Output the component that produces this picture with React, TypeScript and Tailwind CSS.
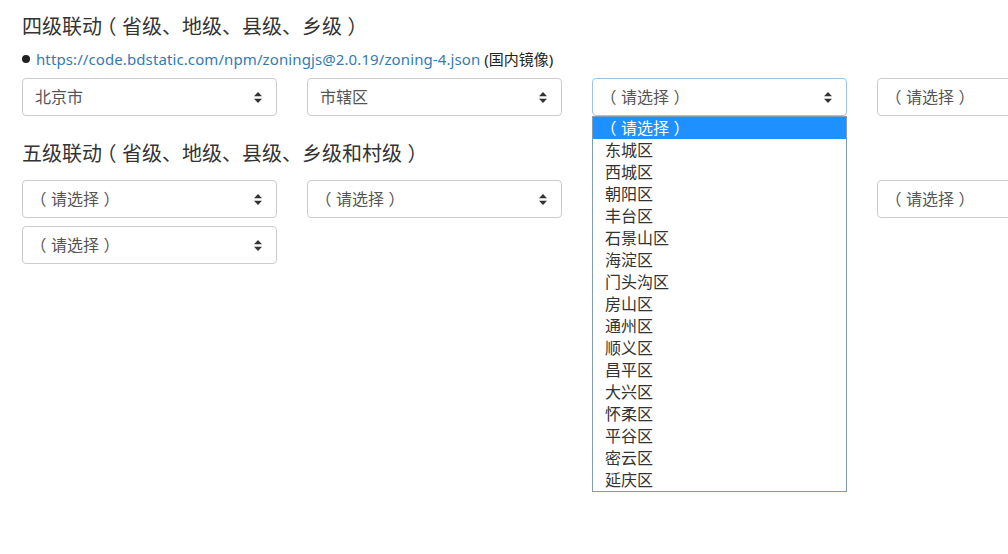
import React from 'react';

const FONT = { fontFamily: '"Noto Sans", "Noto Sans CJK SC", sans-serif' };

const districts = [
  '东城区', '西城区', '朝阳区', '丰台区', '石景山区', '海淀区', '门头沟区', '房山区',
  '通州区', '顺义区', '昌平区', '大兴区', '怀柔区', '平谷区', '密云区', '延庆区',
];

// full-width brackets drawn centred in their em box, like the YaHei ones
const Cjk = ({ text }: { text: string }) => (
  <>
    {text.split(/([（）])/).map((part, i) =>
      part === '（' ? (
        <span key={i} className="relative -left-[0.28em]">（</span>
      ) : part === '）' ? (
        <span key={i} className="relative left-[0.28em]">）</span>
      ) : (
        part
      )
    )}
  </>
);

const Arrows = () => (
  <svg width="8" height="11" viewBox="0 0 8 11" className="shrink-0">
    <path d="M4 0 L8 4.2 L0 4.2 Z" fill="#333" />
    <path d="M4 11 L8 6.8 L0 6.8 Z" fill="#333" />
  </svg>
);

const FakeSelect = ({ value, focused = false, children }: { value: string; focused?: boolean; children?: React.ReactNode }) => (
  <div className="relative w-[255px]">
    <div
      className={`flex h-[38px] items-center justify-between rounded-[4px] border bg-white pl-[12px] pr-[14px] text-[16px] text-[#555] ${
        focused ? 'border-[#9ec3e6]' : 'border-[#ccc]'
      }`}
    >
      <span>
        <Cjk text={value} />
      </span>
      <Arrows />
    </div>
    {children}
  </div>
);

const Dropdown = () => (
  <div className="absolute left-0 top-[38px] z-10 w-[255px] border border-[#7f9cb8] bg-white text-[16px] leading-[22px] text-[#333]">
    <div className="bg-[#1e90ff] pl-[12px] text-white">
      <Cjk text="（请选择）" />
    </div>
    {districts.map((d) => (
      <div key={d} className="pl-[12px]">
        {d}
      </div>
    ))}
  </div>
);

export default function App() {
  return (
    <div lang="zh-CN" className="h-[554px] w-[1008px] overflow-hidden bg-white text-[#333]" style={FONT}>
      <div className="w-[1160px] pl-[22px] pt-[14px]">
        <h3 className="text-[20px] leading-[26px]">
          <Cjk text="四级联动（省级、地级、县级、乡级）" />
        </h3>
        <p className="mt-[9px] flex items-center text-[15px] leading-[20px]">
          <span className="mr-[6px] inline-block h-[8px] w-[8px] rounded-full bg-[#222]" />
          <span className="tracking-[0.1px] text-[#337ab7]">https://code.bdstatic.com/npm/zoningjs@2.0.19/zoning-4.json</span>
          <span className="ml-[4px] text-[#222]">(国内镜像)</span>
        </p>
        <div className="mt-[9px] flex flex-wrap gap-x-[30px] gap-y-[8px]">
          <FakeSelect value="北京市" />
          <FakeSelect value="市辖区" />
          <FakeSelect value="（请选择）" focused>
            <Dropdown />
          </FakeSelect>
          <FakeSelect value="（请选择）" />
        </div>

        <h3 className="mt-[25px] text-[20px] leading-[26px]">
          <Cjk text="五级联动（省级、地级、县级、乡级和村级）" />
        </h3>
        <div className="mt-[13px] flex flex-wrap gap-x-[30px] gap-y-[8px]">
          <FakeSelect value="（请选择）" />
          <FakeSelect value="（请选择）" />
          <FakeSelect value="（请选择）" />
          <FakeSelect value="（请选择）" />
          <FakeSelect value="（请选择）" />
        </div>
      </div>
    </div>
  );
}
